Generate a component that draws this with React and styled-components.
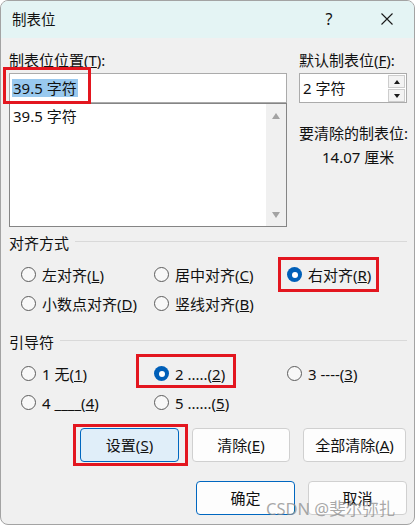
import React from "react";
import styled, { createGlobalStyle } from "styled-components";

const GlobalStyle = createGlobalStyle`
  body {
    margin: 0;
    background: #ffffff;
    font-family: "Noto Sans", "Noto Sans CJK SC", sans-serif;
  }
`;

const Window = styled.div`
  position: relative;
  width: 415px;
  height: 525px;
  box-sizing: border-box;
  border: 1px solid #a3a3a3;
  border-radius: 8px;
  overflow: hidden;
  background: #f0f0f0;
  color: #111;
  font-size: 15px;
  line-height: 20px;
`;

const TitleBar = styled.div`
  height: 37px;
  display: flex;
  align-items: center;
  padding: 0 0 2px 11px;
  box-sizing: border-box;
  background: #e4f4f4;
  font-size: 14.5px;
`;

const Caption = styled.div`
  margin-left: auto;
  display: flex;
  align-items: center;
  margin-right: 21px;
`;

const HelpButton = styled.span`
  width: 20px;
  text-align: center;
  font-size: 16px;
`;

const CloseButton = styled.span`
  display: flex;
  margin-left: 42px;
`;

const Body = styled.div`
  padding: 0 7px 0 8px;
`;

const TopSection = styled.div`
  display: flex;
  margin-top: 12px;
`;

const LeftCol = styled.div`
  width: 278px;
`;

const RightCol = styled.div`
  width: 108px;
  margin-left: 12px;
`;

const FieldLabel = styled.div`
  height: 20px;
  margin-bottom: 3px;
  white-space: nowrap;
`;

const InputWrap = styled.div`
  position: relative;
`;

const TextInput = styled.div`
  height: 30px;
  box-sizing: border-box;
  border: 1px solid #ababab;
  background: #fff;
  display: flex;
  align-items: center;
  padding-left: 2px;
`;

const Selected = styled.span`
  background: #99c9ef;
  line-height: 18px;
  padding: 0 1px;
`;

const Marker = styled.span`
  position: absolute;
  top: ${(p) => p.$top}px;
  left: ${(p) => p.$left}px;
  right: ${(p) => p.$right}px;
  bottom: ${(p) => p.$bottom}px;
  border: 3px solid #e3161f;
  pointer-events: none;
`;

const ListBox = styled.div`
  height: 124px;
  box-sizing: border-box;
  border: 1px solid #858585;
  display: flex;
  background: #fff;
`;

const ListItems = styled.div`
  flex: 1;
  padding: 2px 3px;
`;

const ScrollBar = styled.div`
  width: 20px;
  background: #f0f0f0;
  display: flex;
  flex-direction: column;
  justify-content: space-between;
  align-items: center;
  padding: 9px 0 8px;
  box-sizing: border-box;
`;

const Arrow = styled.span`
  width: 0;
  height: 0;
  border-left: ${(p) => p.$w}px solid transparent;
  border-right: ${(p) => p.$w}px solid transparent;
  ${(p) => (p.$down ? "border-top" : "border-bottom")}: ${(p) => p.$h}px solid ${(p) => p.$color};
`;

const Spinner = styled.div`
  height: 30px;
  box-sizing: border-box;
  border: 1px solid #ababab;
  background: #fff;
  display: flex;
`;

const SpinText = styled.div`
  flex: 1;
  display: flex;
  align-items: center;
  padding-left: 3px;
`;

const SpinButtons = styled.div`
  width: 17px;
  margin: 1px 1px 0 0;
  display: flex;
  flex-direction: column;
  gap: 1px;
`;

const SpinButton = styled.span`
  height: 13px;
  box-sizing: border-box;
  border: 1px solid #cdcdcd;
  background: #f3f3f3;
  display: flex;
  align-items: center;
  justify-content: center;
`;

const ClearLabel = styled.div`
  margin-top: 20px;
  white-space: nowrap;
`;

const ClearValue = styled.div`
  margin-top: 4px;
  padding-left: 23px;
`;

const GroupHeader = styled.div`
  display: flex;
  align-items: center;
  margin-top: ${(p) => p.$gap}px;
`;

const Rule = styled.span`
  flex: 1;
  height: 1px;
  background: #d9d9d9;
  margin: 0 0 4px 6px;
`;

const RadioGrid = styled.div`
  display: grid;
  grid-template-columns: 133px 133px 1fr;
  grid-auto-rows: 29px;
  padding-left: 12px;
  margin-top: 7px;
`;

const RadioItem = styled.label`
  position: relative;
  justify-self: start;
  align-self: center;
  display: flex;
  align-items: center;
  gap: 6px;
  white-space: nowrap;
`;

const Circle = styled.span`
  position: relative;
  width: 15px;
  height: 15px;
  box-sizing: border-box;
  border-radius: 50%;
  border: ${(p) => (p.$on ? "none" : "1px solid #5c5c5c")};
  background: ${(p) => (p.$on ? "#005fb8" : "#f8f8f8")};
  &::after {
    content: "";
    display: ${(p) => (p.$on ? "block" : "none")};
    position: absolute;
    left: 4.5px;
    top: 4.5px;
    width: 6px;
    height: 6px;
    border-radius: 50%;
    background: #fff;
  }
`;

const ButtonRow = styled.div`
  display: flex;
  justify-content: flex-end;
  gap: 13px;
  margin-top: ${(p) => p.$gap}px;
  padding-right: ${(p) => p.$pr}px;
`;

const Button = styled.div`
  position: relative;
  width: ${(p) => p.$w}px;
  height: 34px;
  box-sizing: border-box;
  border-radius: 4px;
  border: 1px solid ${(p) => (p.$tone ? "#0067c0" : "#d0d0d0")};
  background: ${(p) => (p.$tone === "focus" ? "#e0eef9" : "#fdfdfd")};
  display: flex;
  align-items: center;
  justify-content: center;
`;

const Watermark = styled.div`
  position: absolute;
  left: 265px;
  top: 498px;
  font-size: 16.5px;
  color: rgba(140, 140, 140, 0.75);
  white-space: nowrap;
  pointer-events: none;
`;

const Mn = ({ children }) => <u>{children}</u>;

const Radio = ({ on, children, mark }) => (
  <RadioItem>
    <Circle $on={on} />
    <span>{children}</span>
    {mark && <Marker {...mark} />}
  </RadioItem>
);

const alignments = [
  { label: <>左对齐(<Mn>L</Mn>)</> },
  { label: <>居中对齐(<Mn>C</Mn>)</> },
  { label: <>右对齐(<Mn>R</Mn>)</>, on: true, mark: { $top: -8, $left: -9, $right: -8, $bottom: -7 } },
  { label: <>小数点对齐(<Mn>D</Mn>)</> },
  { label: <>竖线对齐(<Mn>B</Mn>)</> },
];

const leaders = [
  { label: <>1 无(<Mn>1</Mn>)</> },
  { label: <>2 .....(<Mn>2</Mn>)</>, on: true, mark: { $top: -10, $left: -18, $right: -11, $bottom: -4 } },
  { label: <>3 ----(<Mn>3</Mn>)</> },
  { label: <>4 ____(<Mn>4</Mn>)</> },
  { label: <>5 ......(<Mn>5</Mn>)</> },
];

export default function App() {
  return (
    <>
      <GlobalStyle />
      <Window>
        <TitleBar>
          制表位
          <Caption>
            <HelpButton>?</HelpButton>
            <CloseButton>
              <svg width="12" height="12" viewBox="0 0 12 12">
                <path d="M0.5 0.5L11.5 11.5M11.5 0.5L0.5 11.5" stroke="#1a1a1a" strokeWidth="1.1" />
              </svg>
            </CloseButton>
          </Caption>
        </TitleBar>
        <Body>
          <TopSection>
            <LeftCol>
              <FieldLabel>制表位位置(<Mn>T</Mn>):</FieldLabel>
              <InputWrap>
                <TextInput>
                  <Selected>39.5 字符</Selected>
                </TextInput>
                <Marker $top={-6} $left={-6} $right={196} $bottom={-1} />
              </InputWrap>
              <ListBox>
                <ListItems>39.5 字符</ListItems>
                <ScrollBar>
                  <Arrow $w={4.5} $h={6} $color="#a3a3a3" />
                  <Arrow $w={4.5} $h={6} $color="#a3a3a3" $down />
                </ScrollBar>
              </ListBox>
            </LeftCol>
            <RightCol>
              <FieldLabel>默认制表位(<Mn>F</Mn>):</FieldLabel>
              <Spinner>
                <SpinText>2 字符</SpinText>
                <SpinButtons>
                  <SpinButton>
                    <Arrow $w={3.5} $h={4} $color="#1a1a1a" />
                  </SpinButton>
                  <SpinButton>
                    <Arrow $w={3.5} $h={4} $color="#1a1a1a" $down />
                  </SpinButton>
                </SpinButtons>
              </Spinner>
              <ClearLabel>要清除的制表位:</ClearLabel>
              <ClearValue>14.07 厘米</ClearValue>
            </RightCol>
          </TopSection>

          <GroupHeader $gap={6}>
            对齐方式
            <Rule />
          </GroupHeader>
          <RadioGrid>
            {alignments.map((a, i) => (
              <Radio key={i} on={a.on} mark={a.mark}>
                {a.label}
              </Radio>
            ))}
          </RadioGrid>

          <GroupHeader $gap={14}>
            引导符
            <Rule />
          </GroupHeader>
          <RadioGrid>
            {leaders.map((a, i) => (
              <Radio key={i} on={a.on} mark={a.mark}>
                {a.label}
              </Radio>
            ))}
          </RadioGrid>

          <ButtonRow $gap={11} $pr={1}>
            <Button $w={99} $tone="focus">
              设置(<Mn>S</Mn>)
              <Marker $top={-5} $left={-8} $right={-10} $bottom={-5} />
            </Button>
            <Button $w={98}>
              清除(<Mn>E</Mn>)
            </Button>
            <Button $w={103}>
              全部清除(<Mn>A</Mn>)
            </Button>
          </ButtonRow>
          <ButtonRow $gap={19} $pr={0}>
            <Button $w={99} $tone="primary">
              确定
            </Button>
            <Button $w={99}>取消</Button>
          </ButtonRow>
        </Body>
        <Watermark>CSDN @斐尔弥扎</Watermark>
      </Window>
    </>
  );
}
